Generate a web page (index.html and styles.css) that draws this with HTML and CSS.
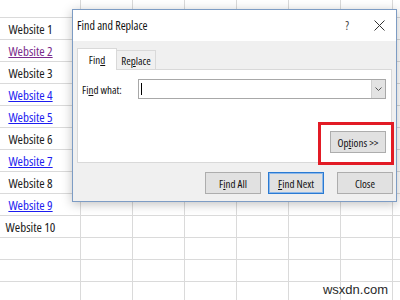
FILE: index.html
```html
<!DOCTYPE html>
<html lang="en">
<head>
    <meta charset="UTF-8">
    <title>Find and Replace</title>
    <link rel="stylesheet" href="styles.css">
</head>
<body>
    <div class="sheet">
        <div class="row"><span class="name"></span></div>
        <div class="row"><span class="name">Website 1</span></div>
        <div class="row"><span class="name"><a class="visited" href="#">Website 2</a></span></div>
        <div class="row"><span class="name">Website 3</span></div>
        <div class="row"><span class="name"><a href="#">Website 4</a></span></div>
        <div class="row"><span class="name"><a href="#">Website 5</a></span></div>
        <div class="row"><span class="name">Website 6</span></div>
        <div class="row"><span class="name"><a href="#">Website 7</a></span></div>
        <div class="row"><span class="name">Website 8</span></div>
        <div class="row"><span class="name"><a href="#">Website 9</a></span></div>
        <div class="row"><span class="name">Website 10</span></div>
        <div class="row"><span class="name"></span></div>
        <div class="row"><span class="name"></span></div>
        <div class="row"><span class="name"></span></div>
    </div>

    <div class="dialog">
        <div class="titlebar">
            <span class="title">Find and Replace</span>
            <span class="help">?</span>
            <svg class="close-x" width="11" height="11" viewBox="0 0 11 11">
                <path d="M0.5 0.5 L10.5 10.5 M10.5 0.5 L0.5 10.5" stroke="#333" stroke-width="1" fill="none"/>
            </svg>
        </div>
        <div class="body">
            <div class="tabs">
                <div class="tab active">Fin<u>d</u></div>
                <div class="tab">Re<u>p</u>lace</div>
            </div>
            <div class="panel">
                <div class="field">
                    <label>Fi<u>n</u>d what:</label>
                    <div class="combo">
                        <span class="caret"></span>
                        <span class="drop">
                            <svg width="7" height="5" viewBox="0 0 7 5">
                                <path d="M0.5 0.5 L3.5 3.5 L6.5 0.5" stroke="#555" fill="none"/>
                            </svg>
                        </span>
                    </div>
                </div>
                <div class="options-row">
                    <button class="btn options">Op<u>t</u>ions &gt;&gt;</button>
                </div>
            </div>
            <div class="actions">
                <button class="btn">F<u>i</u>nd All</button>
                <button class="btn primary"><u>F</u>ind Next</button>
                <button class="btn close">Close</button>
            </div>
        </div>
        <div class="highlight"></div>
    </div>

    <div class="watermark">wsxdn.com</div>
</body>
</html>
```

FILE: styles.css
```css
body {
    margin: 0;
    width: 400px;
    height: 300px;
    overflow: hidden;
    position: relative;
    background: #ffffff;
    font-family: "Open Sans", "Liberation Sans", sans-serif;
    font-stretch: 78%;
    color: #1a1a1a;
}

/* spreadsheet grid */
.sheet {
    margin-top: -4px;
    background:
        linear-gradient(#dadada, #dadada) 80px 0 / 1px 100% no-repeat,
        repeating-linear-gradient(to right, transparent 0 51px, #dadada 51px 52px) 81px 0 / 100% 100% no-repeat;
}

.row {
    height: 21px;
    border-bottom: 1px solid #dadada;
    display: flex;
    align-items: center;
}

.name {
    width: 61px;
    text-align: center;
    font-size: 13px;
    white-space: nowrap;
}

.name a {
    color: #1c1cf0;
}

.name a.visited {
    color: #7a2a8c;
}

/* dialog */
.dialog {
    position: absolute;
    left: 72px;
    top: 9px;
    width: 323px;
    height: 191px;
    border: 1px solid #7d9cc4;
    background: #f0f0f0;
    box-shadow: 0 2px 10px rgba(0, 0, 0, 0.25);
    font-size: 11px;
    font-stretch: 75%;
    color: #111;
}

.titlebar {
    height: 31px;
    background: #ffffff;
    display: flex;
    align-items: center;
    padding: 0 11px 0 4px;
}

.title {
    font-size: 12px;
    flex: 1;
}

.help {
    font-size: 12px;
    color: #444;
    margin-right: 25px;
}

.body {
    padding: 6px 4px 0 4px;
}

.tabs {
    display: flex;
    align-items: flex-end;
    height: 22px;
}

.tab {
    height: 18px;
    width: 38px;
    border: 1px solid #d9d9d9;
    border-bottom: none;
    background: #f0f0f0;
    display: flex;
    align-items: center;
    justify-content: center;
}

.tab.active {
    height: 21px;
    background: #ffffff;
    position: relative;
    top: 1px;
}

.tab + .tab {
    border-left: none;
}

.panel {
    height: 94px;
    background: #ffffff;
    border: 1px solid #d9d9d9;
    display: flex;
    flex-direction: column;
    padding: 9px 5px 9px 4px;
    box-sizing: border-box;
}

.field {
    display: flex;
    align-items: center;
}

.field label {
    width: 56px;
}

.combo {
    flex: 1;
    height: 18px;
    border: 1px solid #a8a8a8;
    display: flex;
    align-items: center;
    justify-content: space-between;
}

.caret {
    width: 1px;
    height: 12px;
    background: #000;
    margin-left: 2px;
}

.drop {
    width: 13px;
    height: 18px;
    background: #e3e3e3;
    border-left: 1px solid #cfcfcf;
    display: flex;
    align-items: center;
    justify-content: center;
}

.options-row {
    margin-top: auto;
    display: flex;
    justify-content: flex-end;
}

.btn {
    font: inherit;
    color: #111;
    height: 22px;
    width: 56px;
    padding: 0;
    background: #e1e1e1;
    border: 1px solid #adadad;
}

.btn.primary {
    border-color: #2a7ad2;
    box-shadow: inset 0 0 0 1px #8cb8ea;
}

.actions {
    display: flex;
    justify-content: flex-end;
    gap: 7px;
    margin-top: 9px;
    margin-right: -1px;
}

.actions .close {
    margin-left: 6px;
}

.highlight {
    position: absolute;
    left: 245px;
    top: 112px;
    width: 70px;
    height: 37px;
    border: 3px solid #e21b25;
}

.watermark {
    position: absolute;
    right: 12px;
    bottom: 3px;
    font-family: "Liberation Sans", Arial, sans-serif;
    font-stretch: normal;
    font-size: 13px;
    color: #2a2a2a;
}
```
